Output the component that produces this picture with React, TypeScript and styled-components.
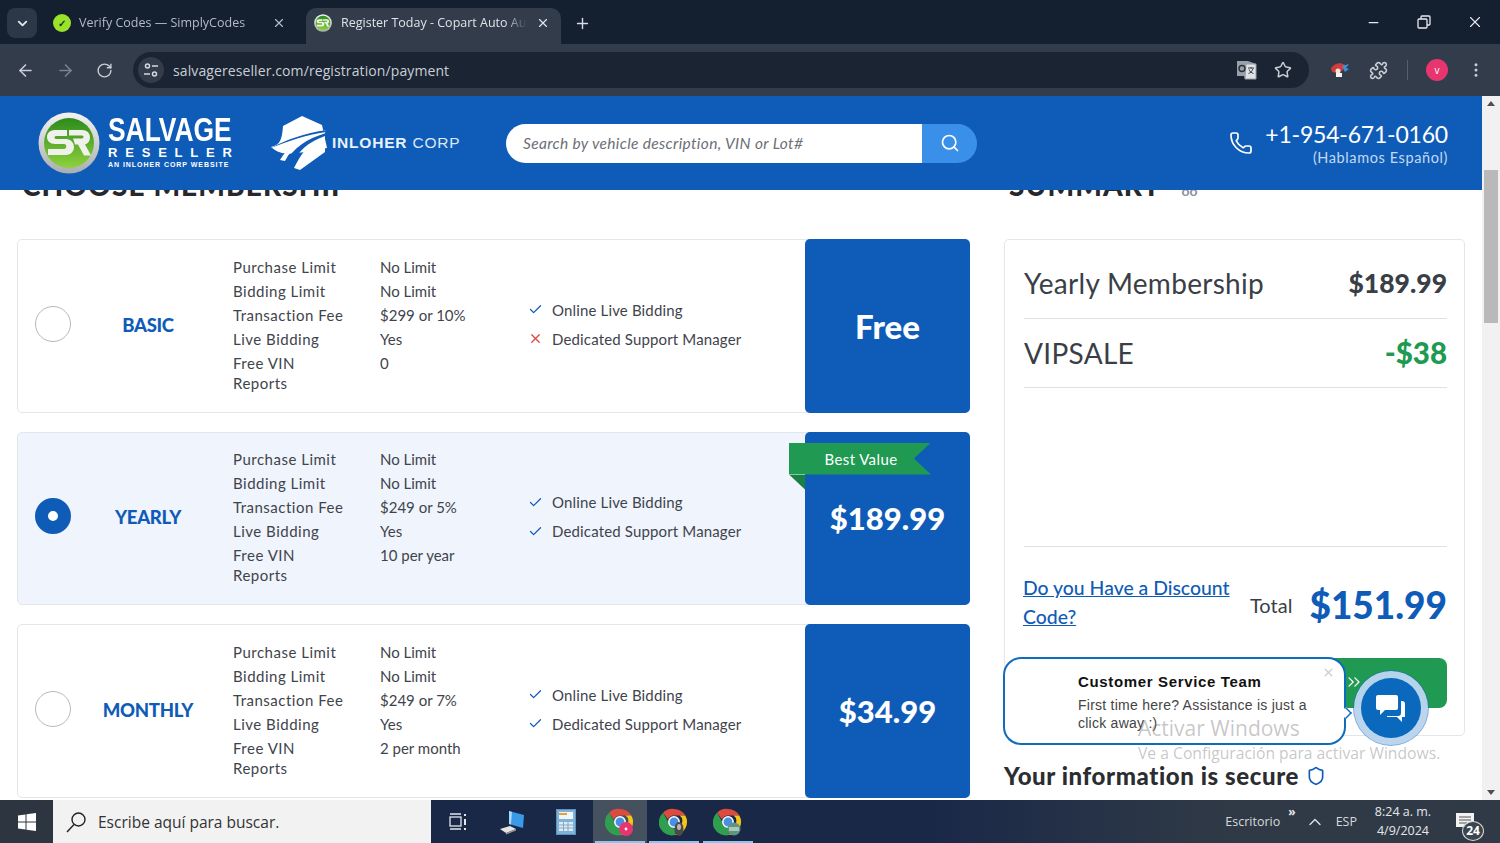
import React from 'react';
import styled, { createGlobalStyle } from 'styled-components';
import {
  ArrowLeft,
  ArrowRight,
  Check,
  ChevronDown,
  ChevronUp,
  ChevronsRight,
  EllipsisVertical,
  Minus,
  Phone,
  Plus,
  Puzzle,
  RotateCw,
  Search,
  Shield,
  Star,
  X,
} from 'lucide-react';

const BLUE = '#0f5cb8';
const GREEN = '#209a52';
const SITE_FONT = '"Lato", "Noto Sans", sans-serif';

const GlobalStyle = createGlobalStyle`
  html, body {
    margin: 0;
    height: 100%;
    overflow: hidden;
    background: #fff;
  }
  body {
    font-family: ${SITE_FONT};
    color: #3a3f47;
  }
  * {
    box-sizing: border-box;
  }
`;

const Screen = styled.div`
  width: 1500px;
  height: 843px;
  display: flex;
  flex-direction: column;
  overflow: hidden;
`;

/* browser chrome */
const TabStrip = styled.div`
  height: 44px;
  flex: none;
  display: flex;
  align-items: flex-end;
  padding-left: 7px;
  background: #141f30;
  font-family: "Open Sans", sans-serif;
`;
const TabMenu = styled.div`
  width: 30px;
  height: 30px;
  margin-bottom: 6px;
  margin-right: 5px;
  border-radius: 8px;
  background: #2c3747;
  color: #e4e7ec;
  display: flex;
  align-items: center;
  justify-content: center;
`;
const Tab = styled.div<{ $active?: boolean }>`
  width: 255px;
  height: 36px;
  margin-right: 9px;
  padding: 0 11px 7px ${({ $active }) => ($active ? '8px' : '11px')};
  border-radius: 10px 10px 0 0;
  background: ${({ $active }) => ($active ? '#323c4b' : 'transparent')};
  color: ${({ $active }) => ($active ? '#dfe3e8' : '#b4bac4')};
  display: flex;
  align-items: center;
  gap: ${({ $active }) => ($active ? '9px' : '8px')};
  font-size: 12.5px;
  white-space: nowrap;
`;
const TabTitle = styled.span`
  flex: 1;
  overflow: hidden;
  mask-image: linear-gradient(to right, #000 88%, transparent);
`;
const Favicon = styled.span`
  width: 18px;
  height: 18px;
  flex: none;
  border-radius: 50%;
  background: #9be22d;
  color: #1c3a10;
  font-size: 10px;
  font-weight: 700;
  display: flex;
  align-items: center;
  justify-content: center;
`;
const NewTab = styled.div`
  width: 24px;
  height: 24px;
  margin: 0 0 9px 0;
  color: #d8dce2;
  display: flex;
  align-items: center;
  justify-content: center;
`;
const WindowControls = styled.div`
  margin-left: auto;
  height: 44px;
  display: flex;
  align-self: flex-start;
`;
const WindowButton = styled.div`
  width: 50.5px;
  display: flex;
  align-items: center;
  justify-content: center;
  color: #e8eaee;
`;

const Toolbar = styled.div`
  height: 52px;
  flex: none;
  display: flex;
  align-items: center;
  padding-left: 5px;
  background: #323c4b;
  color: #c9ced6;
  font-family: "Open Sans", sans-serif;
`;
const ToolSlot = styled.div<{ $width?: number; $dim?: boolean }>`
  width: ${({ $width }) => $width ?? 40}px;
  flex: none;
  display: flex;
  align-items: center;
  justify-content: center;
  color: ${({ $dim }) => ($dim ? '#7a8290' : '#c9ced6')};
`;
const MenuSlot = styled(ToolSlot)`
  margin-left: 4px;
`;
const Omnibox = styled.div`
  width: 1176px;
  height: 36px;
  flex: none;
  margin-left: 9px;
  margin-right: 12px;
  padding: 0 8px 0 5px;
  border-radius: 18px;
  background: #1a2433;
  display: flex;
  align-items: center;
`;
const SiteChip = styled.div`
  width: 26px;
  height: 26px;
  border-radius: 50%;
  background: #323c4b;
  display: flex;
  align-items: center;
  justify-content: center;
  margin-right: 9px;
`;
const Url = styled.span`
  flex: 1;
  font-size: 14px;
  letter-spacing: 0.1px;
  color: #c9ced6;
`;
const OmniIcon = styled.div`
  width: 36px;
  display: flex;
  justify-content: center;
`;
const ToolDivider = styled.div`
  width: 1px;
  height: 20px;
  flex: none;
  background: #55606f;
  margin: 0 18px 0 9px;
`;
const Avatar = styled.div`
  width: 22px;
  height: 22px;
  flex: none;
  border-radius: 50%;
  background: #e8356f;
  color: #fff;
  font-size: 10px;
  display: flex;
  align-items: center;
  justify-content: center;
`;

/* viewport */
const Viewport = styled.div`
  flex: 1;
  min-height: 0;
  display: flex;
`;
const Page = styled.div`
  width: 1482px;
  display: flex;
  flex-direction: column;
  position: relative;
  overflow: hidden;
`;
const Scrollbar = styled.div`
  width: 18px;
  background: #f1f1f1;
  padding: 5px 0;
`;
const ScrollTrack = styled.div`
  position: relative;
  height: 100%;
  display: flex;
  flex-direction: column;
  align-items: center;
  justify-content: space-between;
`;
const ScrollThumb = styled.div`
  position: absolute;
  top: 69px;
  width: 14px;
  height: 153px;
  background: #b9b9b9;
`;
const ScrollArrow = styled.div<{ $up?: boolean }>`
  width: 0;
  height: 0;
  border-left: 4px solid transparent;
  border-right: 4px solid transparent;
  ${({ $up }) => ($up ? 'border-bottom: 5px solid #505050;' : 'border-top: 5px solid #505050;')}
`;

/* site header */
const SiteHeader = styled.header`
  height: 94px;
  flex: none;
  position: relative;
  z-index: 2;
  display: flex;
  align-items: center;
  padding-left: 38px;
  background: ${BLUE};
  color: #fff;
`;
const Brand = styled.div`
  display: flex;
  align-items: center;
  gap: 8px;
  width: 232px;
`;
const Wordmark = styled.div`
  display: flex;
  flex-direction: column;
  font-family: "Liberation Sans", sans-serif;
  width: 125px;
  margin-top: -3px;
`;
const WordSalvage = styled.span`
  font-size: 33px;
  line-height: 31px;
  font-weight: 700;
  transform: scaleX(0.8);
  transform-origin: left center;
  white-space: nowrap;
`;
const WordReseller = styled.span`
  font-size: 13px;
  line-height: 15px;
  font-weight: 700;
  letter-spacing: 7.8px;
  white-space: nowrap;
`;
const WordTag = styled.span`
  font-size: 7px;
  line-height: 10px;
  font-weight: 700;
  letter-spacing: 0.95px;
  white-space: nowrap;
`;
const InloherBrand = styled.div`
  width: 236px;
  display: flex;
  align-items: center;
  gap: 4px;
  font-family: "Liberation Sans", sans-serif;
  font-size: 15.5px;
  letter-spacing: 0.8px;
  white-space: nowrap;
  color: #dce8f6;
  b {
    color: #e9f1fa;
  }
`;
const SearchBox = styled.div`
  width: 471px;
  height: 39px;
  display: flex;
  border-radius: 20px;
  overflow: hidden;
`;
const SearchField = styled.div`
  flex: 1;
  background: #fff;
  padding-left: 17px;
  display: flex;
  align-items: center;
  color: #6b6f76;
  font-size: 15.5px;
  letter-spacing: 0.35px;
  font-style: italic;
`;
const SearchButton = styled.div`
  width: 55px;
  background: #3a8fe8;
  display: flex;
  align-items: center;
  justify-content: center;
`;
const Contact = styled.div`
  margin-left: auto;
  padding-right: 34px;
  display: flex;
  align-items: center;
  gap: 12px;
`;
const ContactText = styled.div`
  display: flex;
  flex-direction: column;
  align-items: flex-end;
  padding-top: 1px;
`;
const PhoneNumber = styled.span`
  font-size: 23px;
  line-height: 28px;
  letter-spacing: -0.2px;
`;
const PhoneNote = styled.span`
  font-size: 14.5px;
  line-height: 20px;
  letter-spacing: 0.6px;
  color: #c3d9f2;
`;

/* content */
const Content = styled.main`
  flex: 1;
  min-height: 0;
  overflow: hidden;
  display: grid;
  grid-template-columns: 953px 461px;
  column-gap: 34px;
  padding-left: 17px;
  align-items: start;
`;
const Column = styled.div`
  display: flex;
  flex-direction: column;
`;
const CutHeading = styled.h2`
  height: 40px;
  margin: -25px 0 34px 5px;
  font-size: 28px;
  line-height: 40px;
  font-weight: 900;
  letter-spacing: 1.1px;
  color: #26282c;
  white-space: nowrap;
  display: flex;
  align-items: flex-end;
  gap: 20px;
`;
const HeadingDots = styled.span`
  font-size: 14px;
  color: #8b929c;
  font-weight: 700;
  letter-spacing: 0;
  line-height: 24px;
  padding-bottom: 2px;
`;
const Plans = styled.div`
  display: flex;
  flex-direction: column;
  gap: 19px;
`;
const PlanCard = styled.article<{ $selected?: boolean }>`
  height: 173.5px;
  display: flex;
  border: 1px solid #e4e6ea;
  border-radius: 5px;
  background: ${({ $selected }) => ($selected ? '#f0f4fc' : '#fff')};
`;
const RadioCell = styled.div`
  width: 71px;
  flex: none;
  padding-left: 17px;
  display: flex;
  align-items: center;
  padding-bottom: 4px;
`;
const Radio = styled.span<{ $checked?: boolean }>`
  width: 36px;
  height: 36px;
  border-radius: 50%;
  border: ${({ $checked }) => ($checked ? `13px solid ${BLUE}` : '1.5px solid #b4b8be')};
  background: #fff;
`;
const PlanName = styled.div`
  width: 118px;
  flex: none;
  display: flex;
  align-items: center;
  justify-content: center;
  padding-bottom: 2px;
  margin-right: 1px;
  font-size: 18.5px;
  font-weight: 900;
  letter-spacing: -0.3px;
  color: ${BLUE};
`;
const SpecGrid = styled.div`
  width: 295px;
  flex: none;
  margin-left: 25px;
  padding-bottom: 2px;
  display: grid;
  grid-template-columns: 147px 1fr;
  align-content: center;
  font-size: 15px;
  color: #3f444c;
`;
const SpecLabel = styled.div`
  line-height: 20px;
  padding: 2px 0;
  letter-spacing: 0.5px;
`;
const SpecValue = styled.div`
  line-height: 20px;
  padding: 2px 0;
`;
const Features = styled.ul`
  flex: 1;
  margin: 0;
  padding: 0 0 3px 0;
  list-style: none;
  display: flex;
  flex-direction: column;
  justify-content: center;
  gap: 9px;
  font-size: 15px;
  letter-spacing: 0.15px;
  color: #3f444c;
`;
const Feature = styled.li`
  display: flex;
  align-items: center;
  gap: 9px;
  line-height: 20px;
`;
const PriceBox = styled.div<{ $large?: boolean }>`
  width: 165px;
  flex: none;
  margin: -1px;
  position: relative;
  border-radius: 5px;
  background: ${BLUE};
  color: #fff;
  font-size: ${({ $large }) => ($large ? '33px' : '31px')};
  font-weight: 900;
  display: flex;
  align-items: center;
  justify-content: center;
`;
const Ribbon = styled.div`
  position: absolute;
  left: -16px;
  top: 11px;
  width: 142px;
  height: 32px;
  padding-left: 18px;
  padding-right: 16px;
  background: ${GREEN};
  clip-path: polygon(0 0, 100% 0, 88% 50%, 100% 100%, 0 100%);
  color: #fff;
  font-size: 15px;
  font-weight: 400;
  letter-spacing: 0.4px;
  display: flex;
  align-items: center;
  justify-content: center;
`;
const RibbonFold = styled.div`
  position: absolute;
  left: -16px;
  top: 43px;
  width: 16px;
  height: 15px;
  background: #1a7f42;
  clip-path: polygon(0 0, 100% 0, 100% 100%);
`;

const SummaryCard = styled.section`
  height: 497px;
  padding: 9px 17px 0 19px;
  border: 1px solid #e4e6ea;
  border-radius: 5px;
  display: flex;
  flex-direction: column;
`;
const SummaryRow = styled.div`
  height: 69.5px;
  flex: none;
  border-bottom: 1px solid #dfe1e5;
  display: flex;
  align-items: center;
  justify-content: space-between;
  font-size: 28px;
  letter-spacing: 0.3px;
  color: #3a3f47;
`;
const SummaryAmount = styled.span<{ $green?: boolean }>`
  font-size: ${({ $green }) => ($green ? '29.5px' : '26.5px')};
  letter-spacing: 0;
  font-weight: 900;
  color: ${({ $green }) => ($green ? GREEN : '#3a3f47')};
`;
const SummaryBlank = styled.div`
  height: 159px;
  flex: none;
  border-bottom: 1px solid #dfe1e5;
`;
const TotalRow = styled.div`
  display: flex;
  align-items: center;
  height: 112px;
  padding-top: 3px;
  flex: none;
`;
const DiscountLink = styled.a`
  width: 227px;
  margin: -6px 0 0 -1px;
  font-size: 19.4px;
  line-height: 29px;
  color: ${BLUE};
  text-decoration: underline;
  font-weight: 500;
`;
const TotalLabel = styled.span`
  font-size: 20px;
  color: #3a3f47;
`;
const TotalAmount = styled.span`
  margin-left: auto;
  font-size: 37px;
  font-weight: 900;
  color: ${BLUE};
`;
const PayButton = styled.div`
  height: 50px;
  flex: none;
  margin-top: -1px;
  border-radius: 8px;
  background: ${GREEN};
  color: #fff;
`;
const SecureLine = styled.div`
  margin-top: 25px;
  display: flex;
  align-items: center;
  gap: 7px;
  font-size: 24px;
  letter-spacing: 0.6px;
  line-height: 30px;
  font-weight: 900;
  color: #2b2d31;
`;

/* overlays */
const ChatPopup = styled.div`
  position: absolute;
  left: 1003px;
  top: 561px;
  width: 343px;
  height: 88px;
  padding: 14px 20px 0 73px;
  border: 2px solid #0f6cbd;
  border-radius: 18px;
  background: #fff;
  font-family: "Liberation Sans", sans-serif;
  z-index: 3;
`;
const ChatTail = styled.span`
  position: absolute;
  right: -8px;
  top: 48px;
  width: 12px;
  height: 12px;
  background: #fff;
  border-top: 2px solid #0f6cbd;
  border-right: 2px solid #0f6cbd;
  transform: rotate(45deg) scale(0.7);
`;
const ChatTitle = styled.div`
  font-size: 15px;
  line-height: 18px;
  font-weight: 700;
  letter-spacing: 0.65px;
  color: #111;
`;
const ChatBody = styled.div`
  margin-top: 5px;
  font-size: 14px;
  line-height: 18px;
  letter-spacing: 0.25px;
  color: #444;
`;
const ChatClose = styled.span`
  position: absolute;
  right: 9px;
  top: 7px;
  color: #cfcfcf;
  display: flex;
`;
const ChatForward = styled.div`
  position: absolute;
  left: 1344px;
  top: 576px;
  color: #fff;
  z-index: 3;
  display: flex;
`;
const ChatBubble = styled.div`
  position: absolute;
  left: 1361px;
  top: 582px;
  width: 60px;
  height: 60px;
  border-radius: 50%;
  background: #0a68bd;
  box-shadow: 0 0 0 7px rgba(190, 215, 240, 0.95), 0 0 0 8px rgba(30, 110, 180, 0.55);
  display: flex;
  align-items: center;
  justify-content: center;
  z-index: 3;
`;
const Watermark = styled.div`
  position: absolute;
  left: 1138px;
  top: 618px;
  z-index: 4;
  font-family: "Open Sans", sans-serif;
  color: rgba(120, 120, 120, 0.42);
  pointer-events: none;
  white-space: nowrap;
`;
const WatermarkTitle = styled.div`
  font-size: 21px;
  line-height: 28px;
`;
const WatermarkText = styled.div`
  font-size: 15.7px;
  line-height: 21px;
  margin-top: 1px;
`;

/* windows taskbar */
const Taskbar = styled.footer`
  height: 43px;
  flex: none;
  display: flex;
  align-items: stretch;
  background: linear-gradient(90deg, #1a2848 0%, #1a2848 62%, #303a46 82%, #303a46 100%);
  color: #e3e6ea;
  font-family: "Open Sans", sans-serif;
`;
const StartButton = styled.div`
  width: 53px;
  background: #2d3640;
  display: flex;
  align-items: center;
  justify-content: center;
`;
const TaskSearch = styled.div`
  width: 378px;
  background: #f2f2f2;
  color: #333;
  font-size: 15.5px;
  display: flex;
  align-items: center;
  gap: 11px;
  padding-left: 12px;
`;
const TaskApp = styled.div<{ $active?: boolean; $open?: boolean }>`
  width: 54px;
  display: flex;
  align-items: center;
  justify-content: center;
  position: relative;
  background: ${({ $active }) => ($active ? '#465160' : 'transparent')};
  &::after {
    content: '';
    display: ${({ $open }) => ($open ? 'block' : 'none')};
    position: absolute;
    left: 2px;
    right: 2px;
    bottom: 0;
    height: 2px;
    background: #8fc3f0;
  }
`;
const Tray = styled.div`
  margin-left: auto;
  display: flex;
  align-items: center;
  font-size: 12.5px;
`;
const TrayMore = styled.span`
  align-self: flex-start;
  margin: 3px 9px 0 8px;
  font-size: 12px;
  font-weight: 700;
`;
const TrayText = styled.span`
  color: #d5d9de;
`;
const TrayLang = styled(TrayText)`
  margin-left: 11px;
`;
const TrayClock = styled.div`
  width: 82px;
  margin-left: 5px;
  margin-top: -2px;
  text-align: center;
  font-size: 12.5px;
  line-height: 19px;
`;
const Notifications = styled.div`
  width: 46px;
  height: 18px;
  margin-left: 8px;
  margin-right: 2px;
  padding-left: 4px;
  position: relative;
`;
const NoticeCount = styled.span`
  position: absolute;
  left: 10px;
  top: 8px;
  width: 22px;
  height: 20px;
  border-radius: 50%;
  border: 1px solid #d8d8d8;
  background: #3b444f;
  color: #fff;
  font-size: 12px;
  font-weight: 700;
  line-height: 18px;
  text-align: center;
`;
const LogoSvg = styled.svg`
  flex: none;
`;

const ChromeIcon = ({ badge }: { badge?: string }) => (
  <svg width="30" height="30" viewBox="0 0 30 30">
    <path d="M15 2a13 13 0 0 1 11.3 6.5H15a6.5 6.5 0 0 0-6 4L4 5.8A13 13 0 0 1 15 2z" fill="#dd4b3e" />
    <path d="M26.3 8.5A13 13 0 0 1 16 28l5.6-9.7a6.5 6.5 0 0 0-1-9.8z" fill="#f5c518" />
    <path d="M16 28A13 13 0 0 1 4 5.8l5.6 9.7a6.5 6.5 0 0 0 6.4 6z" fill="#2f9e4f" />
    <circle cx="15" cy="15" r="5.2" fill="#4a90e2" stroke="#fff" strokeWidth="1.5" />
    {badge === 'v' && <circle cx="21" cy="22" r="7" fill="#e8356f" />}
    {badge === 'v' && <circle cx="21" cy="22" r="1.4" fill="#fff" />}
    {badge === 'photo' && <ellipse cx="20" cy="22" rx="4.5" ry="7" fill="#4a4a4a" />}
    {badge === 'photo' && <ellipse cx="20" cy="20" rx="2" ry="3" fill="#b9b9b9" />}
    {badge === 'cash' && <circle cx="21" cy="22" r="6.5" fill="#5e9484" />}
    {badge === 'cash' && <rect x="16" y="20" width="10" height="4" fill="#a8c9b8" />}
  </svg>
);

const SrLogo = ({ size = 62 }: { size?: number }) => (
  <LogoSvg width={size} height={size} viewBox="0 0 62 62">
    <defs>
      <linearGradient id="srRing" x1="0" y1="0" x2="0" y2="1">
        <stop offset="0" stopColor="#f2f2f2" />
        <stop offset="1" stopColor="#a9aeb0" />
      </linearGradient>
      <linearGradient id="srGreen" x1="0" y1="0" x2="0" y2="1">
        <stop offset="0" stopColor="#2c8a1e" />
        <stop offset="1" stopColor="#8fd13c" />
      </linearGradient>
    </defs>
    <circle cx="31" cy="31" r="30.5" fill="url(#srRing)" />
    <circle cx="31" cy="31" r="25" fill="url(#srGreen)" />
    <path d="M29 18H17c-5 0-8 3-8 7s3 7 8 7h9c3 0 3 5 0 5H10v6h18c5 0 8-4 8-8s-3-8-8-8h-10c-2 0-2-3 0-3h11z" fill="#eef2ea" />
    <path d="M31 18h13c5 0 8 3 8 7.500 0 3.500-2 6-5 7l6 11h-7l-6-11h-3l-2-6h9c2 0 2-3 0-3H31z" fill="#eef2ea" />
  </LogoSvg>
);

const InloherMark = () => (
  <svg width="58" height="56" viewBox="0 0 58 56">
    <path d="M32 1l20 9 5 23-22 4C24 38 12 42 1 32c9-2 11-7 12-21z" fill="#fff" />
    <path d="M55 15v22L30 55l-6-2c6-12 14-25 31-38z" fill="#fff" />
    <path d="M10 45c8-14 22-24 46-30l-1 3C34 23 22 32 15 46z" fill="#fff" />
    <path d="M1 33C16 25 34 18 57 15l-1 2C36 20 18 26 1 33z" fill={BLUE} />
    <path d="M15 47C24 33 36 24 56 18l-1 3C38 27 27 36 22 52z" fill={BLUE} />
  </svg>
);

const RestoreIcon = () => (
  <svg width="14" height="14" viewBox="0 0 14 14" fill="none" stroke="#e8eaee" strokeWidth="1.3">
    <rect x="1" y="4" width="9" height="9" rx="1" />
    <path d="M4 4V2a1 1 0 0 1 1-1h7a1 1 0 0 1 1 1v7a1 1 0 0 1-1 1h-2" />
  </svg>
);

const SiteSettingsIcon = () => (
  <svg width="16" height="16" viewBox="0 0 16 16" fill="none" stroke="#d5d9e0" strokeWidth="1.5">
    <circle cx="4.500" cy="4" r="2" />
    <path d="M9 4h6M1 12h6" />
    <circle cx="11.500" cy="12" r="2" />
  </svg>
);

const TranslateIcon = () => (
  <svg width="22" height="22" viewBox="0 0 22 22">
    <path d="M1 2h11l8 3v15H9l-1-3H1z" fill="#9aa0a8" />
    <path d="M10 5h10v15H9z" fill="#dfe2e6" stroke="#9aa0a8" />
    <circle cx="6" cy="9.500" r="3" fill="none" stroke="#2a303a" strokeWidth="1.400" />
    <path d="M12 9h6M15 8v1.500M17 9.500c-.5 2.500-2.500 4.500-4.500 5M13 10.500c.8 2 2.500 3.500 4.500 4" fill="none" stroke="#3a404a" strokeWidth="1" />
  </svg>
);

const ExtensionIcon = () => (
  <svg width="20" height="18" viewBox="0 0 20 18">
    <path d="M1 7c4-5 9-6 14-3l-2 5-5 3-6-1z" fill="#d33c3c" />
    <path d="M12 5l7-2-3 4 3 1-4 3z" fill="#3c93d8" />
    <circle cx="8" cy="10" r="2.500" fill="#f2e6da" />
    <path d="M6 12h6v4H6z" fill="#f5f5f5" />
  </svg>
);

const WindowsLogo = () => (
  <svg width="18" height="18" viewBox="0 0 18 18" fill="#fff">
    <path d="M0 2.500L7.500 1.400v7.100H0zM8.500 1.300L18 0v8.500H8.500zM0 9.500h7.500v7.100L0 15.500zM8.500 9.500H18V18l-9.500-1.300z" />
  </svg>
);

const TaskSearchIcon = () => (
  <svg width="22" height="22" viewBox="0 0 22 22" fill="none" stroke="#222" strokeWidth="1.400">
    <circle cx="13.500" cy="8.500" r="6.500" />
    <path d="M9 13.500L2 21" />
  </svg>
);

const TaskViewIcon = () => (
  <svg width="20" height="20" viewBox="0 0 20 20" fill="none" stroke="#e3e6ea" strokeWidth="1.300">
    <rect x="2" y="5" width="11" height="9" />
    <path d="M2 2h11M2 17h11" />
    <path d="M17 2v2M17 7v6M17 16v2" strokeWidth="2" />
  </svg>
);

const DesktopIcon = () => (
  <svg width="28" height="28" viewBox="0 0 28 28">
    <path d="M11 3l15 4-1 13-14-4z" fill="#3a9ae8" />
    <path d="M11 3l3 1-1 12.500-2-.5z" fill="#a9d7f8" />
    <path d="M2 21l10-3 6 3-10 4z" fill="#e4e4e4" />
    <path d="M8 25l10-4v1.500L8 26.500z" fill="#9a9a9a" />
  </svg>
);

const CalculatorIcon = () => (
  <svg width="20" height="26" viewBox="0 0 20 26">
    <rect x="0.500" y="0.500" width="19" height="25" fill="#7fb2d8" stroke="#5d92bb" />
    <rect x="3" y="3" width="14" height="7" fill="#f0f5f8" />
    <path d="M3 5h8" stroke="#e2a23c" strokeWidth="2" />
    <path d="M3 13h14v9H3z" fill="#dfeaf2" />
    <path d="M3 16h14M3 19h14M7.500 13v9M12 13v9" stroke="#6f9cc0" strokeWidth="0.800" />
  </svg>
);

const ChatIcon = () => (
  <svg width="32" height="32" viewBox="0 0 32 32" fill="#fff">
    <path d="M3 3h18a2 2 0 0 1 2 2v11a2 2 0 0 1-2 2H10l-5 5v-5H3a2 2 0 0 1-2-2V5a2 2 0 0 1 2-2z" />
    <path d="M26 9h1a3 3 0 0 1 3 3v13h-3v5l-5-5H12v-1h11a3 3 0 0 0 3-3z" />
  </svg>
);

const NoticeIcon = () => (
  <svg width="18" height="18" viewBox="0 0 18 18">
    <path d="M0 0h18v14H0z" fill="#f2f2f2" />
    <path d="M3 4h12M3 7h12M3 10h8" stroke="#555" strokeWidth="1.2" />
  </svg>
);

type Plan = {
  name: string;
  selected?: boolean;
  fee: string;
  live: string;
  vin: string;
  support: boolean;
  price: string;
  best?: boolean;
};

const plans: Plan[] = [
  { name: 'BASIC', fee: '$299 or 10%', live: 'Yes', vin: '0', support: false, price: 'Free' },
  { name: 'YEARLY', selected: true, fee: '$249 or 5%', live: 'Yes', vin: '10 per year', support: true, price: '$189.99', best: true },
  { name: 'MONTHLY', fee: '$249 or 7%', live: 'Yes', vin: '2 per month', support: true, price: '$34.99' },
];

const PlanRow = ({ plan }: { plan: Plan }) => (
  <PlanCard $selected={plan.selected}>
    <RadioCell>
      <Radio $checked={plan.selected} />
    </RadioCell>
    <PlanName>{plan.name}</PlanName>
    <SpecGrid>
      <SpecLabel>Purchase Limit</SpecLabel>
      <SpecValue>No Limit</SpecValue>
      <SpecLabel>Bidding Limit</SpecLabel>
      <SpecValue>No Limit</SpecValue>
      <SpecLabel>Transaction Fee</SpecLabel>
      <SpecValue>{plan.fee}</SpecValue>
      <SpecLabel>Live Bidding</SpecLabel>
      <SpecValue>{plan.live}</SpecValue>
      <SpecLabel>
        Free VIN
        <br />
        Reports
      </SpecLabel>
      <SpecValue>{plan.vin}</SpecValue>
    </SpecGrid>
    <Features>
      <Feature>
        <Check size={15} color={BLUE} />
        Online Live Bidding
      </Feature>
      <Feature>
        {plan.support ? <Check size={15} color={BLUE} /> : <X size={15} color="#e0413a" />}
        Dedicated Support Manager
      </Feature>
    </Features>
    <PriceBox $large={plan.price === 'Free'}>
      {plan.best && <Ribbon>Best Value</Ribbon>}
      {plan.best && <RibbonFold />}
      {plan.price}
    </PriceBox>
  </PlanCard>
);

export default function App() {
  return (
    <Screen>
      <GlobalStyle />
      <TabStrip>
        <TabMenu>
          <ChevronDown size={15} strokeWidth={3} />
        </TabMenu>
        <Tab>
          <Favicon>✓</Favicon>
          <TabTitle>Verify Codes — SimplyCodes</TabTitle>
          <X size={14} />
        </Tab>
        <Tab $active>
          <SrLogo size={18} />
          <TabTitle>Register Today - Copart Auto Auctions</TabTitle>
          <X size={14} />
        </Tab>
        <NewTab>
          <Plus size={17} />
        </NewTab>
        <WindowControls>
          <WindowButton>
            <Minus size={15} />
          </WindowButton>
          <WindowButton>
            <RestoreIcon />
          </WindowButton>
          <WindowButton>
            <X size={18} strokeWidth={1.5} />
          </WindowButton>
        </WindowControls>
      </TabStrip>
      <Toolbar>
        <ToolSlot>
          <ArrowLeft size={19} />
        </ToolSlot>
        <ToolSlot $dim>
          <ArrowRight size={19} />
        </ToolSlot>
        <ToolSlot $width={39}>
          <RotateCw size={17} />
        </ToolSlot>
        <Omnibox>
          <SiteChip>
            <SiteSettingsIcon />
          </SiteChip>
          <Url>salvagereseller.com/registration/payment</Url>
          <OmniIcon>
            <TranslateIcon />
          </OmniIcon>
          <OmniIcon>
            <Star size={18} />
          </OmniIcon>
        </Omnibox>
        <ToolSlot $width={37}>
          <ExtensionIcon />
        </ToolSlot>
        <ToolSlot $width={40}>
          <Puzzle size={19} />
        </ToolSlot>
        <ToolDivider />
        <Avatar>v</Avatar>
        <MenuSlot $width={48}>
          <EllipsisVertical size={18} />
        </MenuSlot>
      </Toolbar>
      <Viewport>
        <Page>
          <SiteHeader>
            <Brand>
              <SrLogo />
              <Wordmark>
                <WordSalvage>SALVAGE</WordSalvage>
                <WordReseller>RESELLER</WordReseller>
                <WordTag>AN INLOHER CORP WEBSITE</WordTag>
              </Wordmark>
            </Brand>
            <InloherBrand>
              <InloherMark />
              <span>
                <b>INLOHER</b> CORP
              </span>
            </InloherBrand>
            <SearchBox>
              <SearchField>Search by vehicle description, VIN or Lot#</SearchField>
              <SearchButton>
                <Search size={20} color="#fff" />
              </SearchButton>
            </SearchBox>
            <Contact>
              <Phone size={24} strokeWidth={1.7} />
              <ContactText>
                <PhoneNumber>+1-954-671-0160</PhoneNumber>
                <PhoneNote>(Hablamos Español)</PhoneNote>
              </ContactText>
            </Contact>
          </SiteHeader>
          <Content>
            <Column>
              <CutHeading>CHOOSE MEMBERSHIP</CutHeading>
              <Plans>
                {plans.map((plan) => (
                  <PlanRow key={plan.name} plan={plan} />
                ))}
              </Plans>
            </Column>
            <Column>
              <CutHeading>
                SUMMARY <HeadingDots>oo</HeadingDots>
              </CutHeading>
              <SummaryCard>
                <SummaryRow>
                  Yearly Membership
                  <SummaryAmount>$189.99</SummaryAmount>
                </SummaryRow>
                <SummaryRow>
                  VIPSALE
                  <SummaryAmount $green>-$38</SummaryAmount>
                </SummaryRow>
                <SummaryBlank />
                <TotalRow>
                  <DiscountLink>Do you Have a Discount Code?</DiscountLink>
                  <TotalLabel>Total</TotalLabel>
                  <TotalAmount>$151.99</TotalAmount>
                </TotalRow>
                <PayButton />
              </SummaryCard>
              <SecureLine>
                Your information is secure
                <Shield size={20} color={BLUE} />
              </SecureLine>
            </Column>
          </Content>
          <ChatPopup>
            <ChatTitle>Customer Service Team</ChatTitle>
            <ChatBody>First time here? Assistance is just a click away :)</ChatBody>
            <ChatClose>
              <X size={13} strokeWidth={2.5} />
            </ChatClose>
            <ChatTail />
          </ChatPopup>
          <ChatForward>
            <ChevronsRight size={20} strokeWidth={1.5} />
          </ChatForward>
          <ChatBubble>
            <ChatIcon />
          </ChatBubble>
          <Watermark>
            <WatermarkTitle>Activar Windows</WatermarkTitle>
            <WatermarkText>Ve a Configuración para activar Windows.</WatermarkText>
          </Watermark>
        </Page>
        <Scrollbar>
          <ScrollTrack>
            <ScrollArrow $up />
            <ScrollThumb />
            <ScrollArrow />
          </ScrollTrack>
        </Scrollbar>
      </Viewport>
      <Taskbar>
        <StartButton>
          <WindowsLogo />
        </StartButton>
        <TaskSearch>
          <TaskSearchIcon />
          Escribe aquí para buscar.
        </TaskSearch>
        <TaskApp>
          <TaskViewIcon />
        </TaskApp>
        <TaskApp>
          <DesktopIcon />
        </TaskApp>
        <TaskApp>
          <CalculatorIcon />
        </TaskApp>
        <TaskApp $active $open>
          <ChromeIcon badge="v" />
        </TaskApp>
        <TaskApp $open>
          <ChromeIcon badge="photo" />
        </TaskApp>
        <TaskApp $open>
          <ChromeIcon badge="cash" />
        </TaskApp>
        <Tray>
          <TrayText>Escritorio</TrayText>
          <TrayMore>»</TrayMore>
          <ChevronUp size={20} strokeWidth={1.5} />
          <TrayLang>ESP</TrayLang>
          <TrayClock>
            8:24 a. m.
            <br />
            4/9/2024
          </TrayClock>
          <Notifications>
            <NoticeIcon />
            <NoticeCount>24</NoticeCount>
          </Notifications>
        </Tray>
      </Taskbar>
    </Screen>
  );
}
